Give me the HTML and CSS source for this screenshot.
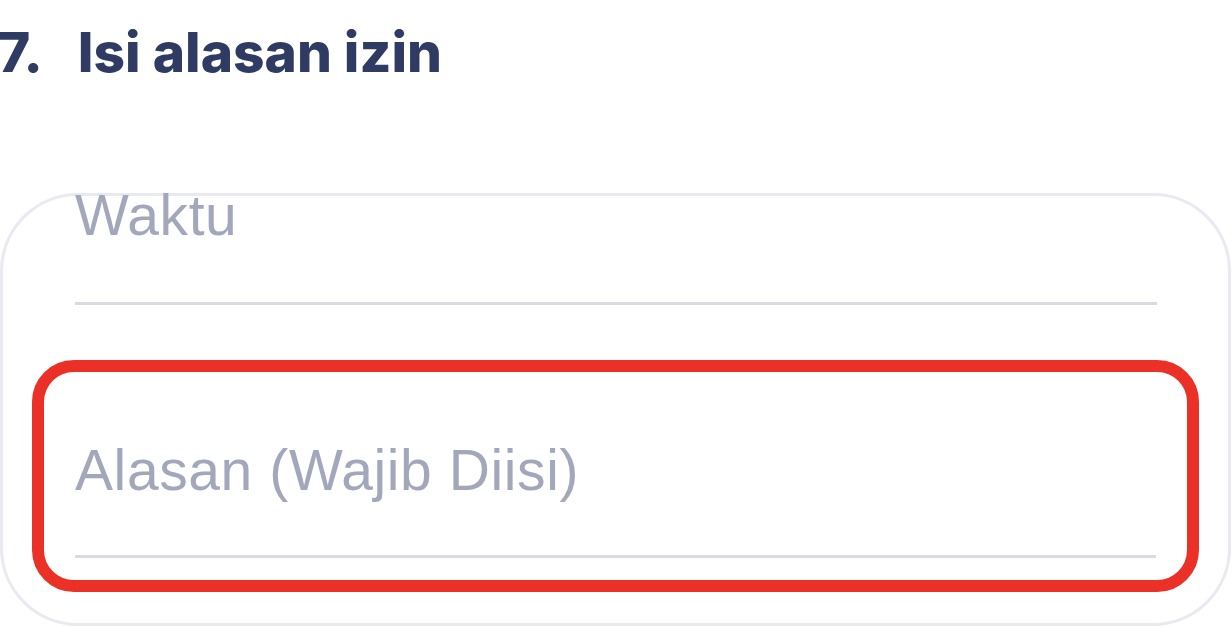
FILE: index.html
```html
<!DOCTYPE html>
<html lang="id">
<head>
<meta charset="utf-8">
<title>Isi alasan izin</title>
<link rel="stylesheet" href="styles.css">
</head>
<body>
  <h1 class="title"><span class="num">7.</span><span class="text">Isi alasan izin</span></h1>
  <div class="card">
    <div class="field field-top">
      <span class="label">Waktu</span>
    </div>
    <div class="highlight">
      <div class="field field-reason">
        <span class="label">Alasan (Wajib Diisi)</span>
      </div>
    </div>
  </div>
</body>
</html>
```
FILE: styles.css
```css
html, body {
  margin: 0;
  padding: 0;
  background: #ffffff;
}

body {
  width: 1232px;
  height: 627px;
  overflow: hidden;
}

.title {
  display: flex;
  gap: 35px;
  margin: 23px 0 0 -2px;
  font-family: Inter, Lato, "Noto Sans", sans-serif;
  font-weight: 800;
  font-size: 55px;
  line-height: 58px;
  color: #2f3b63;
  letter-spacing: 0px;
}

.card {
  margin: 112px 1px 0 0;
  border: 3px solid #e8e9f1;
  border-radius: 78px;
  display: flex;
  flex-direction: column;
}

.field {
  border-bottom: 3px solid #d9dae4;
}

.label {
  display: block;
  font-family: "Liberation Sans", Arial, sans-serif;
  font-size: 57px;
  line-height: 57px;
  color: #a2a7bc;
  letter-spacing: 0.6px;
}

.field-top {
  margin: -9px 71px 0 72px;
  padding-bottom: 58px;
}

.highlight {
  margin: 55px 29px 31px 29px;
  border: 12px solid #ea3027;
  border-radius: 42px;
  padding: 0 31px 22px 31px;
}

.field-reason {
  padding-top: 70px;
  padding-bottom: 56px;
}
```
